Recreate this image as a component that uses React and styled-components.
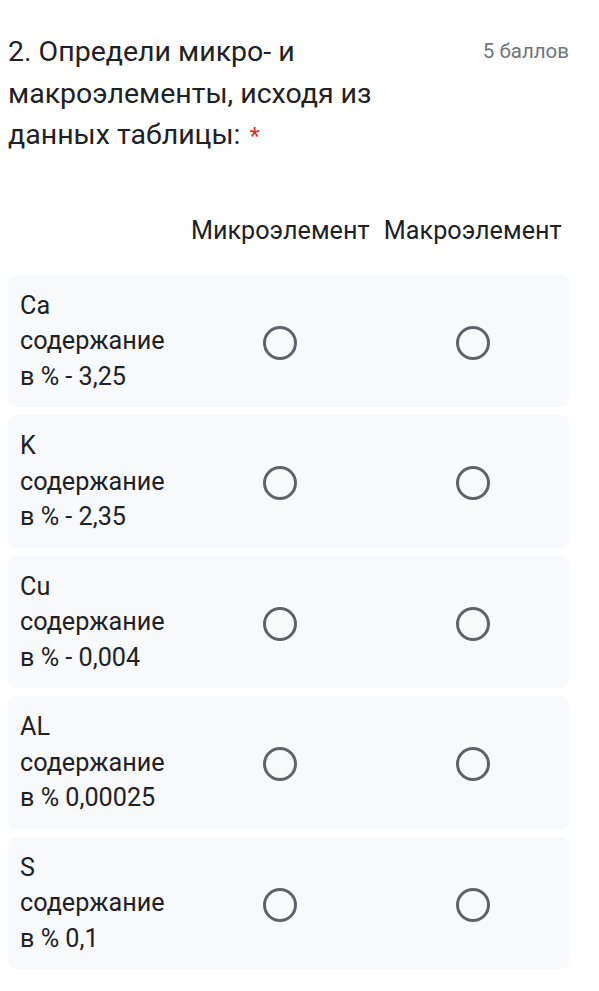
import styled, { createGlobalStyle } from "styled-components";

const GlobalStyle = createGlobalStyle`
  body {
    margin: 0;
    background: #ffffff;
    font-family: Roboto, "Liberation Sans", Arial, sans-serif;
    color: #202124;
  }
`;

const Page = styled.div`
  width: 561px;
  padding: 31px 30px 24px 8px;
`;

const Header = styled.div`
  display: flex;
  align-items: flex-start;
  gap: 24px;
`;

const Title = styled.div`
  flex: 1;
  font-size: 28.5px;
  line-height: 41.5px;
`;

const Required = styled.span`
  color: #d93025;
  font-size: 24px;
  line-height: 24px;
  margin-left: 2px;
`;

const Points = styled.div`
  font-size: 20.5px;
  line-height: 41.5px;
  color: #70757a;
  white-space: nowrap;
`;

const Grid = styled.div`
  margin-top: 60px;
  display: flex;
  flex-direction: column;
  gap: 8px;
`;

const Row = styled.div`
  display: grid;
  grid-template-columns: 176px 1fr 1fr;
  align-items: center;
  border-radius: 8px;
  background: ${(props) => (props.head ? "transparent" : "#f8f9fa")};
  margin-bottom: ${(props) => (props.head ? "21px" : "0")};
`;

const ColLabel = styled.div`
  text-align: center;
  font-size: 25.2px;
  line-height: 30px;
  white-space: nowrap;
`;

const RowLabel = styled.div`
  padding: 13px 12px 13px 12px;
  font-size: 25.2px;
  line-height: 35.5px;
`;

const Cell = styled.div`
  display: flex;
  justify-content: center;
  align-items: center;
  padding-top: 4px;
`;

const Radio = styled.div`
  width: 34px;
  height: 34px;
  box-sizing: border-box;
  border: 3.7px solid #5f6368;
  border-radius: 50%;
`;

const rows = [
  ["Ca", "содержание", "в % - 3,25"],
  ["K", "содержание", "в % - 2,35"],
  ["Cu", "содержание", "в % - 0,004"],
  ["AL", "содержание", "в % 0,00025"],
  ["S", "содержание", "в % 0,1"],
];

const columns = ["Микроэлемент", "Макроэлемент"];

export default function App() {
  return (
    <>
      <GlobalStyle />
      <Page>
        <Header>
          <Title>
            2. Определи микро- и макроэлементы, исходя из данных таблицы:{" "}
            <Required>*</Required>
          </Title>
          <Points>5 баллов</Points>
        </Header>
        <Grid>
          <Row head>
            <div />
            {columns.map((c) => (
              <ColLabel key={c}>{c}</ColLabel>
            ))}
          </Row>
          {rows.map((r) => (
            <Row key={r[0]}>
              <RowLabel>
                {r[0]}
                <br />
                {r[1]}
                <br />
                {r[2]}
              </RowLabel>
              {columns.map((c) => (
                <Cell key={c}>
                  <Radio />
                </Cell>
              ))}
            </Row>
          ))}
        </Grid>
      </Page>
    </>
  );
}
